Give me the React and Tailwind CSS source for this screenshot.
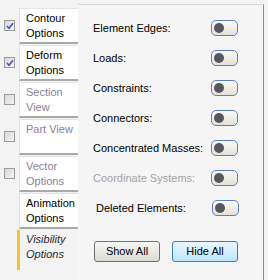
import React from 'react'

// Left column tabs: label lines, checkbox state, enabled
const tabs = [
	{ id: 'contour', lines: ['Contour', 'Options'], box: true, checked: true, enabled: true },
	{ id: 'deform', lines: ['Deform', 'Options'], box: true, checked: true, enabled: true },
	{ id: 'section', lines: ['Section', 'View'], box: true, checked: false, enabled: false },
	{ id: 'part', lines: ['Part View', ''], box: true, checked: false, enabled: false },
	{ id: 'vector', lines: ['Vector', 'Options'], box: true, checked: false, enabled: false },
	{ id: 'animation', lines: ['Animation', 'Options'], box: false, checked: false, enabled: true },
]

const rows = [
	{ label: 'Element Edges:' },
	{ label: 'Loads:' },
	{ label: 'Constraints:' },
	{ label: 'Connectors:' },
	{ label: 'Concentrated Masses:' },
	{ label: 'Coordinate Systems:', disabled: true },
	{ label: 'Deleted Elements:', indent: true },
]

const CheckBox = ({ checked }) => (
	<div className="w-[11px] h-[11px] border border-[#9c9c9c] bg-gradient-to-br from-[#d8d8d8] to-[#f4f4f4] flex items-center justify-center">
		{checked && (
			<svg width="8" height="8" viewBox="0 0 8 8">
				<path d="M1 4 L3 6.2 L7 1.2" fill="none" stroke="#3f55c8" strokeWidth="1.6" />
			</svg>
		)}
	</div>
)

const Toggle = () => (
	<div className="w-[27px] h-[16px] rounded-[5px] border border-[#5a7ec8] bg-gradient-to-b from-[#fbfbf8] to-[#e3e0d6] flex items-center pl-[2px]">
		<div className="w-[10px] h-[10px] rounded-full bg-[#55565e]" />
	</div>
)

export default function App() {
	return (
		<div
			className="w-[268px] h-[280px] overflow-hidden bg-[#f3f3f3] flex text-[11px] leading-[15px]"
			style={{ fontFamily: '"Liberation Sans", Arial, sans-serif' }}
		>
			{/* tab column */}
			<div className="w-[78px] pt-[7px] flex flex-col">
				{tabs.map((t) => (
					<div key={t.id} className="flex items-center h-[37px]">
						<div className="w-[19px] pl-[4px]">{t.box && <CheckBox checked={t.checked} />}</div>
						<div
							className={`w-[59px] h-[36px] bg-white border-t border-l border-[#e4e4e4] border-b-2 border-b-[#a9a9a9] pl-[6px] pt-[2px] ${
								t.enabled ? 'text-black' : 'text-[#8d8098]'
							}`}
						>
							<div>{t.lines[0]}</div>
							<div>{t.lines[1]}</div>
						</div>
					</div>
				))}
				<div className="flex h-[40px] mt-[1px]">
					<div className="w-[17px]" />
					<div className="w-[61px] border-l-[3px] border-[#f4c430] pl-[6px] pt-[2px] italic text-[#2a2a2a]">
						<div>Visibility</div>
						<div>Options</div>
					</div>
				</div>
			</div>

			{/* options panel */}
			<div className="flex-1 mt-[4px] mr-[4px] border-t border-[#dadada] border-r border-r-[#8a8a8a] bg-[#f5f5f5] pt-[8px]">
				{rows.map((r) => (
					<div key={r.label} className="h-[30px] flex items-center justify-between pl-[15px] pr-[25px]">
						<span className={`${r.disabled ? 'text-[#a3a3a3]' : 'text-black'} ${r.indent ? 'pl-[3px]' : ''}`}>
							{r.label}
						</span>
						<div className={r.indent ? 'mr-[-1px]' : ''}>
							<Toggle />
						</div>
					</div>
				))}
				<div className="flex gap-[12px] pl-[16px] mt-[18px]">
					<button className="w-[66px] h-[21px] rounded-[3px] border border-[#707070] bg-gradient-to-b from-[#f6f6f6] to-[#dcdcd4] text-black">
						Show All
					</button>
					<button className="w-[66px] h-[21px] rounded-[3px] border border-[#3c7fb1] bg-gradient-to-b from-[#eaf6fd] to-[#bee6fd] text-black">
						Hide All
					</button>
				</div>
			</div>
		</div>
	)
}
